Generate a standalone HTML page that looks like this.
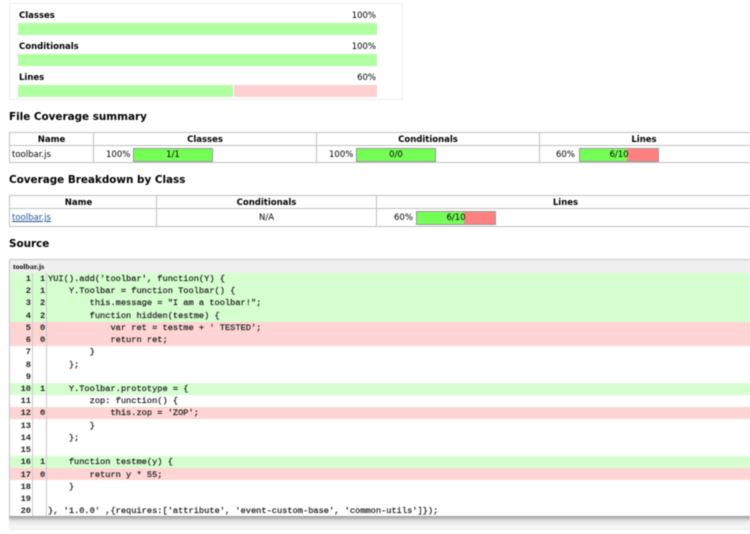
<!DOCTYPE html>
<html><head><meta charset="utf-8"><style>
html,body{margin:0;padding:0;background:#fff;width:750px;height:534px;overflow:hidden}
#p{position:absolute;left:0;top:0;width:750px;height:534px;overflow:hidden;filter:blur(.45px);font-family:"DejaVu Sans","Liberation Sans",sans-serif;color:#000}
#p div{position:absolute;white-space:pre}
.t{font-size:8.5px;line-height:12px;margin-top:1px}
.b{font-weight:bold}
.h{font-size:10.4px;font-weight:bold;line-height:14px;left:9px;color:#000}
.c{text-align:center}
.r{text-align:right}
.l{background:#c0c0c0}
#p .bar{height:12px;background:#74ff55;border:1px solid #999;width:78px;margin-top:0}
.code{left:0;width:750px;height:12.2px}
.m{font-family:"Liberation Mono","DejaVu Sans Mono",monospace;font-size:8.69px;line-height:12.22px;color:#222;-webkit-text-stroke:.22px #222}
.n{font-weight:bold;-webkit-text-stroke:0}
</style></head><body><div id="p">

<div style="left:9px;top:3px;width:392px;height:95px;border:1px solid #eee"></div>
<div class="t b" style="left:19px;top:9px">Classes</div><div class="t r" style="left:300px;width:76px;top:9px">100%</div>
<div style="left:18px;top:23px;width:359px;height:12px;background:#b0ffa0"></div>
<div class="t b" style="left:19px;top:40px">Conditionals</div><div class="t r" style="left:300px;width:76px;top:40px">100%</div>
<div style="left:18px;top:54px;width:359px;height:12px;background:#b0ffa0"></div>
<div class="t b" style="left:19px;top:71px">Lines</div><div class="t r" style="left:300px;width:76px;top:71px">60%</div>
<div style="left:18px;top:85px;width:215px;height:12px;background:#b0ffa0"></div>
<div style="left:234px;top:85px;width:143px;height:12px;background:#ffd0d0"></div>

<div class="h" style="top:110px">File Coverage summary</div>

<div class="l" style="left:9px;top:132px;width:741px;height:1px"></div>
<div class="l" style="left:9px;top:145px;width:741px;height:1px"></div>
<div class="l" style="left:9px;top:162px;width:741px;height:1px"></div>
<div class="l" style="left:9px;top:132px;width:1px;height:31px"></div>
<div class="l" style="left:93px;top:132px;width:1px;height:31px"></div>
<div class="l" style="left:316px;top:132px;width:1px;height:31px"></div>
<div class="l" style="left:539px;top:132px;width:1px;height:31px"></div>
<div class="t b c" style="left:10px;width:83px;top:133px">Name</div>
<div class="t b c" style="left:94px;width:222px;top:133px">Classes</div>
<div class="t b c" style="left:317px;width:222px;top:133px">Conditionals</div>
<div class="t b c" style="left:539px;width:210px;top:133px">Lines</div>
<div class="t" style="left:12px;top:148px">toolbar.js</div>
<div class="t" style="left:106px;top:148px">100%</div>
<div class="bar t c" style="left:133px;top:148px">1/1</div>
<div class="t" style="left:329px;top:148px">100%</div>
<div class="bar t c" style="left:356px;top:148px">0/0</div>
<div class="t" style="left:556px;top:148px">60%</div>
<div class="bar t c" style="left:579px;top:148px;background:linear-gradient(90deg,#74ff55 0 60%,#ff8080 60%)">6/10</div>

<div class="h" style="top:173px">Coverage Breakdown by Class</div>

<div class="l" style="left:9px;top:195px;width:741px;height:1px"></div>
<div class="l" style="left:9px;top:208px;width:741px;height:1px"></div>
<div class="l" style="left:9px;top:226px;width:741px;height:1px"></div>
<div class="l" style="left:9px;top:195px;width:1px;height:32px"></div>
<div class="l" style="left:156px;top:195px;width:1px;height:32px"></div>
<div class="l" style="left:376px;top:195px;width:1px;height:32px"></div>
<div class="t b c" style="left:10px;width:137px;top:196px">Name</div>
<div class="t b c" style="left:157px;width:219px;top:196px">Conditionals</div>
<div class="t b c" style="left:379px;width:373px;top:196px">Lines</div>
<div class="t" style="left:12px;top:211px;color:#1f4f9c;text-decoration:underline">toolbar.js</div>
<div class="t c" style="left:157px;width:219px;top:211px">N/A</div>
<div class="t" style="left:394px;top:211px">60%</div>
<div class="bar t c" style="left:416px;top:211px;background:linear-gradient(90deg,#74ff55 0 60%,#ff8080 60%)">6/10</div>

<div class="h" style="top:237px">Source</div>

<div style="left:9px;top:259px;width:741px;height:1px;background:#c4c4c4"></div>
<div style="left:10px;top:260px;width:740px;height:13px;background:#efefef"></div>
<div class="b" style="left:13px;top:261px;font-size:7.6px;line-height:12px;font-family:'Liberation Serif',serif;letter-spacing:.1px">toolbar.js</div>

<div class="code" style="top:273px;height:48.8px;background:#d6ffd0"></div>
<div class="code" style="top:321.8px;height:24.4px;background:#ffd4d4"></div>
<div class="code" style="top:382.8px;height:12.2px;background:#d6ffd0"></div>
<div class="code" style="top:407.2px;height:12.2px;background:#ffd4d4"></div>
<div class="code" style="top:456px;height:12.2px;background:#d6ffd0"></div>
<div class="code" style="top:468.2px;height:12.2px;background:#ffd4d4"></div>
<div style="left:0;top:273px;width:10px;height:245px;background:#fff"></div>
<div style="left:9px;top:259px;width:1px;height:259px;background:#c4c4c4"></div>
<div style="left:32px;top:273px;width:1px;height:245px;background:#c8c8c8"></div>
<div style="left:46px;top:273px;width:1px;height:245px;background:#c8c8c8"></div>

<div class="m r n" style="left:10px;width:21px;top:273px">1
2
3
4
5
6
7
8
9
10
11
12
13
14
15
16
17
18
19
20</div>
<div class="m n" style="left:40px;top:273px">1
1
2
2
0
0



1

0



1
0</div>
<div class="m" style="left:48px;top:273px">YUI().add('toolbar', function(Y) {
    Y.Toolbar = function Toolbar() {
        this.message = "I am a toolbar!";
        function hidden(testme) {
            var ret = testme + ' TESTED';
            return ret;
        }
    };

    Y.Toolbar.prototype = {
        zop: function() {
            this.zop = 'ZOP';
        }
    };

    function testme(y) {
        return y * 55;
    }

}, '1.0.0' ,{requires:['attribute', 'event-custom-base', 'common-utils']});</div>

<div style="left:9px;top:516px;width:741px;height:14px;background:linear-gradient(180deg,#9a9a9a 0,#b8b8b8 2px,#e6e6e6 5px,#f6f6f6 10px,#f4f4f4 13px,#e8e8e8 14px)"></div>
</div></body></html>
